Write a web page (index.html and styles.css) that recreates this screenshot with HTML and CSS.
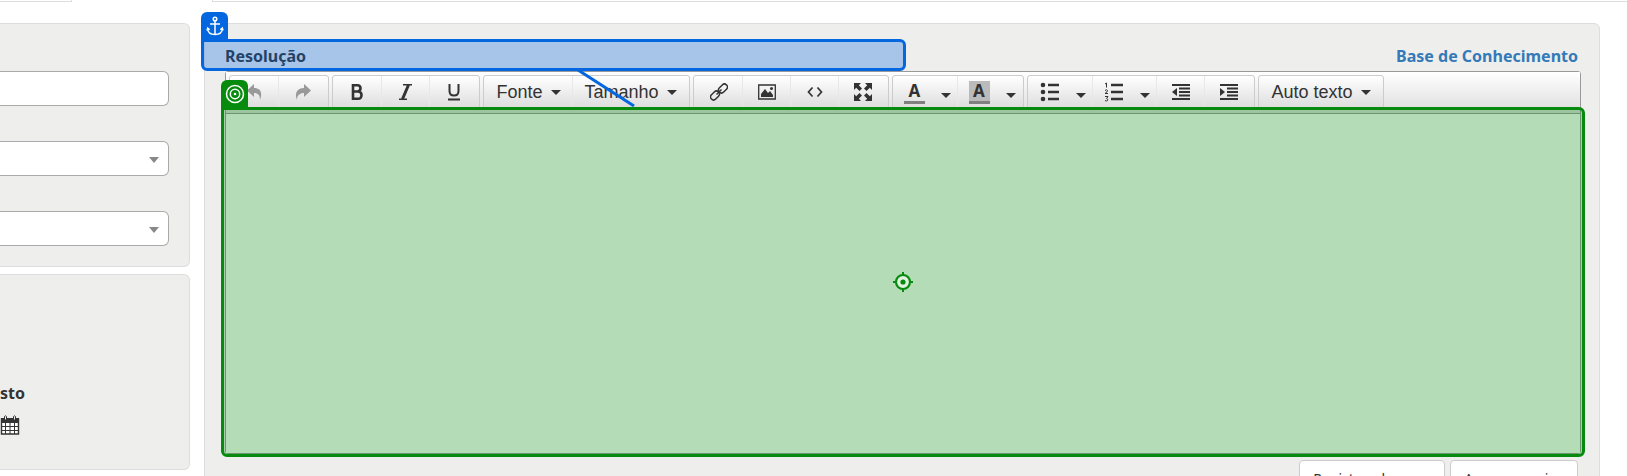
FILE: index.html
```html
<!DOCTYPE html>
<html lang="pt-BR">
<head>
<meta charset="utf-8">
<title>Resolução</title>
<link rel="stylesheet" href="styles.css">
</head>
<body>
<div class="tabs"><div class="tab-edge"></div><div class="tab-rest"></div></div>
<main class="layout">
  <aside class="side">
    <section class="panel fields">
      <input class="field" type="text" aria-label="Campo">
      <div class="picker"><select class="field" aria-label="Categoria"><option></option></select></div>
      <div class="picker"><select class="field" aria-label="Tipo"><option></option></select></div>
    </section>
    <section class="panel dates">
      <strong class="date-label">sto</strong>
      <button class="calendar" aria-label="Calendário">
        <svg width="20" height="20" viewBox="0 0 20 20"><path d="M1.500 4h17v15h-17z" fill="#fff" stroke="#333" stroke-width="1.400"/><path d="M1 3h18v5H1z" fill="#333"/><path d="M5.500 7v12M10 7v12M14.500 7v12M1 11.500h18M1 15.500h18" stroke="#333" fill="none"/><path d="M4.500 5V1.500q1-1.500 2 0V5zM13.500 5V1.500q1-1.500 2 0V5z" fill="#eee" stroke="#333"/></svg>
      </button>
    </section>
  </aside>
  <section class="panel resolution">
    <header class="heading">
      <label class="title" for="editor">Resolução</label>
      <a class="knowledge" href="#">Base de Conhecimento</a>
      <div class="anchor-box"><span class="badge blue"><svg width="18" height="20" viewBox="0 0 18 20" fill="none" stroke="#fff" stroke-width="1.500"><circle cx="9" cy="3" r="1.800"/><path d="M9 5V18.500M4 8h10M1.500 12.500q.5 6 7.500 6t7.500-6M1 14.500l.7-2.500 2 1.700M17 14.500l-.7-2.500-2 1.700"/></svg></span>
        <svg class="connector" width="60" height="42" viewBox="0 0 60 42"><path d="M2 2L58 38" stroke="#0467df" stroke-width="3"/></svg></div>
    </header>
    <div class="editor">
      <div class="toolbar">
        <div class="group">
          <button class="tool" aria-label="Desfazer"><svg width="18" height="18" viewBox="0 0 18 18"><path d="M8 1v4c6 0 9 4 6 12 0-5-2-7-6-7v4L1 7.500z" fill="#999"/></svg></button>
          <button class="tool" aria-label="Refazer"><svg width="18" height="18" viewBox="0 0 18 18"><path d="M10 1v4C4 5 0 9 3 17c0-5 3-7 7-7v4l7-6.500z" fill="#999"/></svg></button>
        </div>
        <div class="group">
          <button class="tool" aria-label="Negrito"><svg width="18" height="18" viewBox="0 0 18 18" fill="none" stroke="#333" stroke-width="2.600"><path d="M4 2.300h4.500q3 0 3 3T8.500 8.500H4zM4 8.500h5q3.500 0 3.500 3.600T9 15.700H4z"/></svg></button>
          <button class="tool" aria-label="Itálico"><svg width="18" height="18" viewBox="0 0 18 18" fill="none" stroke="#333"><path d="M6 1.700h9M2 16.300h8" stroke-width="1.400"/><path d="M11.500 2l-6 14" stroke-width="3"/></svg></button>
          <button class="tool" aria-label="Sublinhado"><svg width="18" height="18" viewBox="0 0 18 18" fill="none" stroke="#333" stroke-width="2"><path d="M4.500 1v7q0 4.500 4.500 4.500T13.500 8V1M3 16.500h12"/></svg></button>
        </div>
        <div class="group">
          <button class="tool text font">Fonte <i class="caret"></i></button>
          <button class="tool text size">Tamanho <i class="caret"></i></button>
        </div>
        <div class="group">
          <button class="tool" aria-label="Link"><svg width="18" height="18" viewBox="0 0 18 18" fill="none" stroke="#333" stroke-width="1.500"><rect x="8" y="2.500" width="10" height="6" rx="3" transform="rotate(-45 13 5.500)"/><rect x="0" y="9.500" width="10" height="6" rx="3" transform="rotate(-45 5 12.500)"/><path d="M6.500 11.500l5-5"/></svg></button>
          <button class="tool" aria-label="Imagem"><svg width="18" height="18" viewBox="0 0 18 18"><path d="M.7 2h16.600v14H.7z" fill="none" stroke="#333" stroke-width="1.300"/><path d="M3 14V11l4-5 3 4 2-2 3 4v2z" fill="#333"/><circle cx="13.500" cy="5.500" r="1.500" fill="#333"/></svg></button>
          <button class="tool" aria-label="Código"><svg width="18" height="18" viewBox="0 0 18 18" fill="none" stroke="#333" stroke-width="1.700"><path d="M6.500 4.500L2.500 9l4 4.500M11.500 4.500l4 4.500-4 4.500"/></svg></button>
          <button class="tool" aria-label="Tela cheia"><svg width="20" height="20" viewBox="0 0 20 20"><path d="M1 1h7L5.800 3.200 9 6.500 6.500 9 3.200 5.800 1 8zM19 1v7l-2.200-2.200L13.500 9 11 6.500l3.200-3.300L12 1zM1 19v-7l2.200 2.200L6.500 11 9 13.500l-3.200 3.300L8 19zM19 19h-7l2.200-2.200L11 13.500l2.500-2.500 3.300 3.200L19 12z" fill="#333"/></svg></button>
        </div>
        <div class="group">
          <button class="tool color" aria-label="Cor do texto"><span class="letter">A</span><i class="caret"></i></button>
          <button class="tool color" aria-label="Cor de fundo"><span class="letter filled">A</span><i class="caret"></i></button>
        </div>
        <div class="group">
          <button class="tool list" aria-label="Marcadores"><svg width="20" height="20" viewBox="0 0 20 20"><g fill="#333"><circle cx="3" cy="3" r="2.300"/><circle cx="3" cy="10" r="2.300"/><circle cx="3" cy="17" r="2.300"/></g><path d="M8 3h11M8 10h11M8 17h11" stroke="#333" stroke-width="2.600"/></svg><i class="caret"></i></button>
          <button class="tool list" aria-label="Numeração"><svg width="20" height="20" viewBox="0 0 20 20" fill="none" stroke="#333"><path d="M1 2l1.500-1v4.500M1 8.500q1.500-1.500 2.500 0 0 1.500-2.500 3h3M1 14.500h3l-1.500 2q2 .5 1 2-1 1-2.500 0"/><path d="M7 3h12M7 10h12M7 17h12" stroke-width="2.600"/></svg><i class="caret"></i></button>
          <button class="tool" aria-label="Diminuir recuo"><svg width="18" height="18" viewBox="0 0 18 18"><path d="M0 2h18M0 16h18M7 5.500h11M7 9h11M7 12.500h11" stroke="#333" stroke-width="2.200"/><path d="M5 5v8L0 9z" fill="#333"/></svg></button>
          <button class="tool" aria-label="Aumentar recuo"><svg width="18" height="18" viewBox="0 0 18 18"><path d="M0 2h18M0 16h18M7 5.500h11M7 9h11M7 12.500h11" stroke="#333" stroke-width="2.200"/><path d="M0 5v8l5-4z" fill="#333"/></svg></button>
        </div>
        <div class="group"><button class="tool text auto">Auto texto <i class="caret"></i></button></div>
      </div>
      <textarea class="content" id="editor"></textarea>
      <div class="target-box"><span class="badge green"><svg width="20" height="20" viewBox="0 0 20 20" fill="none" stroke="#fff" stroke-width="1.500"><circle cx="10" cy="10" r="8.500"/><circle cx="10" cy="10" r="4.700"/><circle cx="10" cy="10" r="1.300" fill="#fff" stroke="none"/></svg></span>
        <svg width="22" height="22" viewBox="0 0 22 22"><circle cx="11" cy="11" r="7" fill="#e1f2e1" stroke="#078b0e" stroke-width="2.200"/><path d="M11 1v4M11 17v4M1 11h4M17 11h4" stroke="#078b0e" stroke-width="2"/><circle cx="11" cy="11" r="2.600" fill="#078b0e"/></svg></div>
    </div>
    <footer class="actions"><button class="action wide">Registrar despesa</button><button class="action">Anexar arquivo</button></footer>
  </section>
</main>
</body>
</html>
```
FILE: styles.css
```css
* { box-sizing: border-box; }
body { margin: 0; height: 100vh; overflow: hidden; background: #fff; color: #333; font-family: "Noto Sans", sans-serif; font-size: 16px; }
button { font-family: inherit; color: inherit; }
.tabs { display: flex; justify-content: space-between; gap: 140px; height: 23px; }
.tab-edge { width: 72px; height: 2px; border: solid #ddd; border-width: 0 1px 1px 0; }
.tab-rest { flex: 1; height: 2px; border: solid #ddd; border-width: 0 0 1px 1px; }
.layout { display: flex; align-items: flex-start; gap: 14px; padding-right: 27px; }
.side { width: 190px; display: grid; gap: 7px; }
.panel { background: #eeeeed; border: 1px solid #ddd; border-radius: 6px; }
.side .panel { border-left: 0; border-radius: 0 6px 6px 0; }
.fields { display: grid; gap: 35px; padding: 47px 20px 20px 0; }
.field { display: block; width: 100%; height: 35px; background: #fff; border: 1px solid #aaa; border-left: 0; border-radius: 0 6px 6px 0; appearance: none; }
.picker { position: relative; }
.picker::after { content: ""; position: absolute; right: 10px; top: 16px; border: 5px solid transparent; border-top: 6px solid #888; border-bottom: 0; pointer-events: none; }
.dates { padding: 106px 0 32px; }
.date-label { display: block; line-height: 24px; }
.calendar { display: block; padding: 0; margin-top: 10px; border: 0; background: none; height: 22px; }
.resolution { flex: 1; min-width: 0; padding: 15px 18px 0 20px; }
.heading { position: relative; display: flex; justify-content: space-between; height: 32px; line-height: 34px; font-weight: 700; padding-right: 3px; }
.title { color: #333; }
.knowledge { color: #337ab7; text-decoration: none; }
.anchor-box { position: absolute; left: -24px; top: 0; width: 52%; height: 32px; background: rgba(4, 103, 223, .3); border: 3px solid #0467df; border-radius: 0 6px 6px 6px; z-index: 2; }
.badge { position: absolute; left: -3px; bottom: calc(100% + 3px); width: 27px; height: 27px; display: flex; align-items: center; justify-content: center; border-radius: 6px 6px 0 0; }
.blue { background: #0467df; }
.green { background: #078b0e; }
.connector { position: absolute; left: 372px; top: 26px; }
.editor { position: relative; border: 1px solid #999; border-radius: 3px; background: #fff; }
.toolbar { display: flex; gap: 3px; height: 41px; padding: 3px 3px 4px; background: linear-gradient(#fff, #ddd); overflow: hidden; }
.group { display: flex; padding: 0 1px; border: 1px solid #ccc; border-radius: 3px; background: linear-gradient(#fff, #ddd); }
.tool { display: flex; align-items: center; justify-content: center; width: 48px; padding: 0; border: 0; border-right: 1px solid #e8e8e8; background: none; }
.tool:last-child { border-right: 0; }
.text { gap: 8px; font: 18px "Liberation Sans", Arial, sans-serif; }
.font { width: 88px; }
.size { width: 115px; }
.auto { width: 122px; }
.caret { border: 5px solid transparent; border-top-color: #333; border-bottom: 0; }
.color, .list { width: 64px; gap: 16px; padding-left: 4px; }
.color .caret, .list .caret { margin-top: 6px; }
.letter { width: 21px; height: 23px; border-bottom: 3px solid #808080; font: bold 17px/20px "Noto Sans", sans-serif; }
.filled { background: #bbb; }
.content { display: block; width: 100%; height: 340px; padding: 8px; border: 0; border-top: 1px solid #999; resize: none; background: #fff; }
.target-box { position: absolute; left: -5px; right: -5px; top: 35px; height: 350px; display: grid; place-items: center; background: rgba(7, 139, 14, .3); border: 3px solid #078b0e; border-radius: 0 6px 6px 6px; }
.actions { display: flex; justify-content: flex-end; gap: 5px; padding: 6px 3px 12px; }
.action { width: 128px; height: 36px; border: 1px solid #ccc; border-radius: 4px; background: #fff; font-size: 14px; }
.wide { width: 146px; }
```
